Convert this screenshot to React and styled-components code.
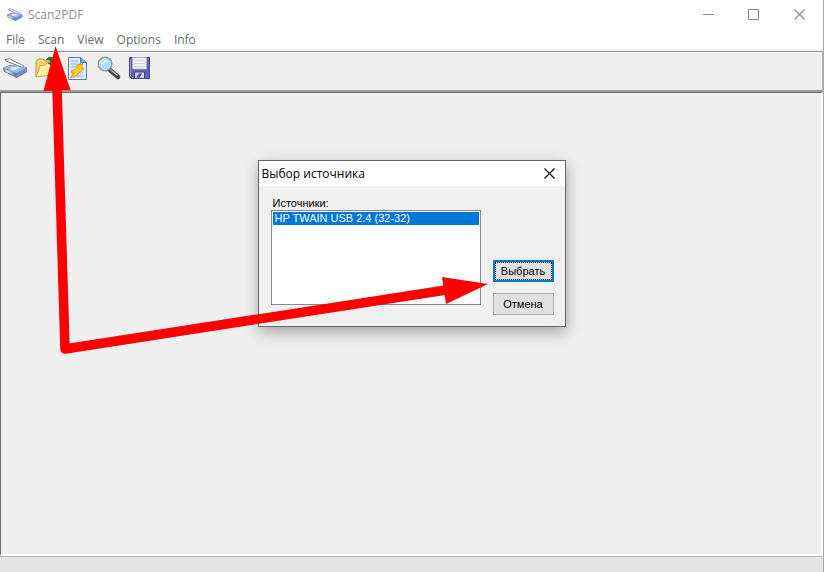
import React from "react";
import styled, { createGlobalStyle } from "styled-components";

const GlobalStyle = createGlobalStyle`
  * { box-sizing: border-box; }
  body { margin: 0; font-family: "Open Sans", "Noto Sans", sans-serif; font-size: 12px; }
`;

const Window = styled.div`
  position: relative;
  display: flex;
  flex-direction: column;
  min-height: 100vh;
  background: #efefef;
  border-right: 1px solid #a8a8a8;
  overflow: hidden;
`;

const TitleBar = styled.header`
  display: flex;
  align-items: center;
  gap: 5px;
  height: 29px;
  padding-left: 7px;
  background: #fff;
  color: #8f8f8f;
`;

const WindowTitle = styled.h1`
  flex: 1;
  margin: 0;
  font-size: 12px;
  font-weight: 400;
`;

const CaptionButtons = styled.div`
  display: flex;
`;

const CaptionButton = styled.button`
  display: grid;
  place-items: center;
  width: ${(p) => p.$width}px;
  height: 29px;
  padding: 0;
  border: 0;
  background: transparent;
  color: ${(p) => p.$color};
`;

const MenuBar = styled.nav`
  display: flex;
  gap: 13px;
  height: 22px;
  padding-left: 6px;
  background: #fff;
  border-bottom: 2px solid #f4f4f4;
`;

const MenuItem = styled.button`
  height: 20px;
  padding: 1px 0 0;
  border: 0;
  background: transparent;
  color: #6b6b6b;
  font: 12px/20px "Open Sans", "Noto Sans", sans-serif;
`;

const Toolbar = styled.div`
  display: flex;
  gap: 4px;
  height: 41px;
  padding: 3px 0 0 2px;
  border-top: 1px solid #909090;
  border-bottom: 2px solid #9b9b9b;
  border-right: 1px solid #b4b4b4;
  box-shadow: inset 0 1px #fff;
`;

const ToolButton = styled.button`
  display: grid;
  place-items: center;
  width: 27px;
  height: 27px;
  padding: 0;
  border: 0;
  background: transparent;
  svg { display: block; }
`;

const Workspace = styled.main`
  flex: 1;
  border-top: 1px solid #6c6c6c;
  border-left: 1px solid #6c6c6c;
  border-right: 2px solid #fff;
  border-bottom: 2px solid #fff;
`;

const StatusBar = styled.footer`
  height: 16px;
  border-top: 1px solid #b2b2b2;
  background: #e5e5e5;
`;

const DialogLayer = styled.div`
  position: absolute;
  inset: 0;
  display: flex;
  justify-content: center;
  align-items: flex-start;
  padding-top: 160px;
`;

const Dialog = styled.section`
  width: 308px;
  border: 1px solid #666;
  background: #f0f0f0;
  box-shadow: 1px 5px 14px rgba(0, 0, 0, 0.32);
`;

const DialogHeader = styled.header`
  display: flex;
  align-items: center;
  justify-content: space-between;
  height: 25px;
  padding-left: 3px;
  background: #fff;
`;

const DialogTitle = styled.h2`
  margin: 0;
  font-size: 12px;
  font-weight: 400;
  color: #000;
`;

const DialogBody = styled.div`
  display: flex;
  gap: 12px;
  padding: 10px 11px 11px 12px;
  font: 11px "Liberation Sans", Arial, sans-serif;
`;

const SourceField = styled.div`
  flex: 1;
`;

const SourceLabel = styled.label`
  display: block;
  height: 14px;
  padding-left: 2px;
  line-height: 14px;
`;

const SourceList = styled.select`
  display: block;
  width: 100%;
  height: 95px;
  padding: 1px;
  border: 1px solid #828790;
  border-radius: 0;
  outline: 0;
  background: #fff;
  overflow: hidden;
  font: 11px/13px "Liberation Sans", Arial, sans-serif;
`;

const SourceOption = styled.option`
  height: 13px;
  min-height: 13px;
  padding: 0 2px;
  line-height: 13px;
  color: #fff;
  &:checked { background: #0078d7 linear-gradient(#0078d7, #0078d7); color: #fff; }
`;

const DialogActions = styled.div`
  display: flex;
  flex-direction: column;
  gap: 11px;
  width: 61px;
  padding-top: 64px;
`;

const ActionButton = styled.button`
  height: 22px;
  padding: 0;
  border: ${(p) => (p.$primary ? "2px solid #0078d7" : "1px solid #adadad")};
  outline: ${(p) => (p.$primary ? "1px dotted #000" : "0")};
  outline-offset: -3px;
  background: #e1e1e1;
  color: #000;
  font: 11px/16px "Liberation Sans", Arial, sans-serif;
`;

const Annotation = styled.svg`
  position: absolute;
  top: 0;
  left: 0;
  pointer-events: none;
`;

function ScannerIcon({ size, id }) {
  return (
    <svg width={size} height={size} viewBox="0 0 24 24" aria-hidden="true">
      <defs>
        <linearGradient id={id} x1="0" x2="1" y1="0" y2="0.3">
          <stop offset="0" stopColor="#8c909c" />
          <stop offset="0.35" stopColor="#d5e6fb" />
          <stop offset="0.62" stopColor="#8dbcf5" />
          <stop offset="1" stopColor="#5f83bd" />
        </linearGradient>
      </defs>
      <path d="m0 12 7-3 16 2v4.5L13 21 1 15Z" fill="#767b88" />
      <path d="m0 11.8 7-3 15.5 2.2L14 16Z" fill="#b3b8c4" stroke="#7d818c" strokeWidth=".6" />
      <path d="m7 10.8 9-1 6 1.5-9 5-7-2.5Z" fill="#8bbdf6" />
      <path d="m8 11 6-.8 2 1-6 2.8-3-1Z" fill="#e0f0ff" />
      <path d="m1 12.5 12 4V20L1.5 14.6Z" fill={`url(#${id})`} />
      <path d="m13 16.5 9.5-4.8V15L13 20Z" fill="#7193c6" />
      <path d="m2 3.5 4-1 14 7-1.5 1.2L3 5Z" fill="#e4e5e9" stroke="#747780" strokeWidth=".9" />
      <path d="m5 4 13.5 5.8" stroke="#fff" />
    </svg>
  );
}

function OpenIcon() {
  return (
    <svg width="25" height="25" viewBox="0 0 25 25" aria-hidden="true">
      <path d="M2 21V6l2-3h5l2 2h7v3" fill="#f4d56b" stroke="#c49b2e" />
      <path d="m2 21 4-11 5-1 2-2h9l-4 12Z" fill="#ffed9d" stroke="#cda842" />
      <path d="m5 19 3-8 5-1 2-2" fill="none" stroke="#fff8cf" />
      <path d="M12 4c4-5 7-3 8 2l2-1-3 6-5-4h3c0-3-2-4-5-3Z" fill="#197a26" stroke="#086015" strokeWidth=".6" />
    </svg>
  );
}

function DocumentIcon() {
  return (
    <svg width="25" height="25" viewBox="0 0 25 25" aria-hidden="true">
      <path d="M3.5 1.5h12l6 5v17h-18Z" fill="#dceeff" stroke="#557daf" />
      <path d="M15.5 1.5v5h6" fill="#66b1db" stroke="#3980b1" />
      <path d="M6 5h7M6 8h12M6 11h12M6 14h12M6 17h12M6 20h12" stroke="#83afd8" />
      <path d="m12 9 6-1-2 4 3 1-7 5 1 1-8 3 4-5-3-1 6-4Z" fill="#ffd51e" stroke="#f3941b" />
    </svg>
  );
}

function SearchIcon() {
  return (
    <svg width="26" height="26" viewBox="0 0 26 26" aria-hidden="true">
      <path d="m14 14 8 7" stroke="#444" strokeWidth="4.5" strokeLinecap="round" />
      <path d="m14.5 13.5 7 6" stroke="#bcbdbd" strokeWidth="1.5" />
      <circle cx="9" cy="8" r="6.6" fill="#b7e2ff" stroke="#7d96a8" strokeWidth="1.8" />
      <circle cx="9" cy="8" r="5.5" fill="#a8dcff" stroke="#d4e7f0" />
      <path d="M5 8c1-4 5-5 8-2-3-1-5 0-7 4Z" fill="#fff" />
    </svg>
  );
}

function SaveIcon() {
  return (
    <svg width="25" height="25" viewBox="0 0 25 25" aria-hidden="true">
      <path d="M2.5 1.5h20v21h-18l-2-2Z" fill="#6260bd" stroke="#454394" />
      <path d="M5.5 1.5h14V13h-14Z" fill="#f3f3f6" stroke="#b4b2ca" strokeWidth=".6" />
      <path d="M7 4.5h11M7 7.5h11M7 10.5h11" stroke="#d0d1d9" />
      <path d="M7.5 16h10v6.5h-10Z" fill="#d4d6e5" stroke="#403b8d" />
      <path d="m9 21.5 3-4h3l-2 4Z" fill="#554da8" />
      <path d="M3.5 4v16" stroke="#9391dc" />
    </svg>
  );
}

const tools = [
  { name: "Scan", icon: <ScannerIcon size={25} id="scannerTool" /> },
  { name: "Open", icon: <OpenIcon /> },
  { name: "Edit document", icon: <DocumentIcon /> },
  { name: "Preview", icon: <SearchIcon /> },
  { name: "Save", icon: <SaveIcon /> },
];

function CloseIcon() {
  return (
    <svg width="11" height="11" viewBox="0 0 11 11" fill="none" aria-hidden="true">
      <path d="m.5.5 10 10m0-10-10 10" stroke="currentColor" strokeWidth="1.1" />
    </svg>
  );
}

export default function App() {
  return (
    <Window>
      <GlobalStyle />
      <TitleBar>
        <ScannerIcon size={16} id="scannerTitle" />
        <WindowTitle>Scan2PDF</WindowTitle>
        <CaptionButtons>
          <CaptionButton type="button" aria-label="Minimize" $width={45} $color="#888">
            <svg width="11" height="11" aria-hidden="true"><path d="M0 5.5h11" stroke="currentColor" /></svg>
          </CaptionButton>
          <CaptionButton type="button" aria-label="Maximize" $width={45} $color="#888">
            <svg width="11" height="11" fill="none" aria-hidden="true"><path d="M.5.5h10v10H.5Z" stroke="currentColor" /></svg>
          </CaptionButton>
          <CaptionButton type="button" aria-label="Close" $width={47} $color="#888"><CloseIcon /></CaptionButton>
        </CaptionButtons>
      </TitleBar>
      <MenuBar aria-label="Main menu">
        {["File", "Scan", "View", "Options", "Info"].map((name) => (
          <MenuItem type="button" key={name}>{name}</MenuItem>
        ))}
      </MenuBar>
      <Toolbar role="toolbar" aria-label="Tools">
        {tools.map((tool) => (
          <ToolButton type="button" key={tool.name} aria-label={tool.name}>{tool.icon}</ToolButton>
        ))}
      </Toolbar>
      <Workspace />
      <StatusBar />
      <DialogLayer>
        <Dialog role="dialog" aria-labelledby="dialog-title">
          <DialogHeader>
            <DialogTitle id="dialog-title">Выбор источника</DialogTitle>
            <CaptionButton type="button" aria-label="Закрыть" $width={31} $color="#000"><CloseIcon /></CaptionButton>
          </DialogHeader>
          <DialogBody>
            <SourceField>
              <SourceLabel htmlFor="sources">Источники:</SourceLabel>
              <SourceList id="sources" size={7} defaultValue="hp">
                <SourceOption value="hp">HP TWAIN USB 2.4 (32-32)</SourceOption>
              </SourceList>
            </SourceField>
            <DialogActions>
              <ActionButton type="button" $primary>Выбрать</ActionButton>
              <ActionButton type="button">Отмена</ActionButton>
            </DialogActions>
          </DialogBody>
        </Dialog>
      </DialogLayer>
      <Annotation width="824" height="572" viewBox="0 0 824 572" aria-hidden="true">
        <path d="M57 88 65 349 446 290" fill="none" stroke="#fe0000" strokeWidth="9.5" strokeLinejoin="round" />
        <path d="m55.5 46 15 44-27 1ZM488 284l-46-7 4 27Z" fill="#fe0000" />
      </Annotation>
    </Window>
  );
}
